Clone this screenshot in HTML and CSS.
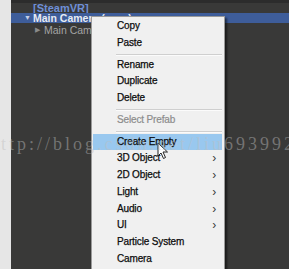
FILE: index.html
```html
<!DOCTYPE html>
<html>
<head>
<meta charset="utf-8">
<link rel="stylesheet" href="styles.css">
</head>
<body>
<div class="side"></div>
<div class="panel">
  <div class="topbar"></div>
  <div class="row steam">[SteamVR]</div>
  <div class="row selected"><span class="tri">&#9660;</span>Main Camera (eyes)</div>
  <div class="row child"><span class="tri">&#9654;</span>Main Camera (ears)</div>
</div>

<div class="menu">
  <div class="item">Copy</div>
  <div class="item">Paste</div>
  <div class="sep"></div>
  <div class="item">Rename</div>
  <div class="item">Duplicate</div>
  <div class="item">Delete</div>
  <div class="sep"></div>
  <div class="item disabled">Select Prefab</div>
  <div class="sep"></div>
  <div class="item hover">Create Empty</div>
  <div class="item sub">3D Object<span class="arr">&#8250;</span></div>
  <div class="item sub">2D Object<span class="arr">&#8250;</span></div>
  <div class="item sub">Light<span class="arr">&#8250;</span></div>
  <div class="item sub">Audio<span class="arr">&#8250;</span></div>
  <div class="item sub">UI<span class="arr">&#8250;</span></div>
  <div class="item">Particle System</div>
  <div class="item">Camera</div>
</div>

<svg class="cursor" width="12" height="18" viewBox="0 0 12 18">
  <path d="M1 1 L1 14 L4 11 L6.5 16.5 L8.5 15.5 L6 10 L10.5 10 Z" fill="#fff" stroke="#222" stroke-width="1" stroke-linejoin="round"/>
</svg>

<div class="watermark">http://blog.csdn.net/liu6939923</div>
</body>
</html>
```

FILE: styles.css
```css
html, body {
  margin: 0;
  padding: 0;
}
body {
  width: 289px;
  height: 269px;
  overflow: hidden;
  display: flex;
  background: #393939;
  font-family: "Liberation Sans", Arial, sans-serif;
  position: relative;
}
.side {
  width: 11px;
  background: #e6e6e6;
  flex: none;
}
.panel {
  flex: 1;
  background: #393938;
  display: flex;
  flex-direction: column;
}
.topbar {
  height: 3px;
  background: #2c2c2c;
}
.row {
  height: 10px;
  line-height: 10px;
  font-size: 10.5px;
  white-space: nowrap;
  overflow: hidden;
}
.steam {
  padding-left: 22px;
  color: #6e8fd6;
  font-weight: bold;
  font-size: 11px;
}
.selected {
  background: #3e5d9a;
  color: #e8ecf4;
  font-weight: bold;
  padding-left: 13px;
}
.selected .tri {
  font-size: 7px;
  color: #c6d0e6;
  margin-right: 2px;
  display: inline-block;
  width: 7px;
  vertical-align: top;
}
.child {
  margin-top: 2px;
  padding-left: 24px;
  color: #a4a4a4;
}
.child .tri {
  font-size: 7px;
  color: #8a8a8a;
  margin-right: 2px;
  display: inline-block;
  width: 7px;
  vertical-align: top;
}
.menu {
  position: absolute;
  left: 91px;
  top: 16px;
  width: 132px;
  height: 270px;
  background: #f0f0f0;
  border: 1px solid #9a9a9a;
  box-shadow: 2px 2px 2px rgba(0,0,0,0.55);
  padding-top: 1px;
  display: flex;
  flex-direction: column;
}
.item {
  height: 16.75px;
  line-height: 16.75px;
  padding-left: 25px;
  font-size: 10px;
  letter-spacing: -0.15px;
  color: #0c0c0c;
  -webkit-text-stroke: 0.25px #0c0c0c;
  position: relative;
  margin: 0 2px 0 0;
  flex: none;
}
.item.disabled {
  color: #8c8c8c;
  -webkit-text-stroke: 0.2px #8c8c8c;
}
.item.hover {
  background: #99c8ef;
  margin-left: 1px;
  padding-left: 24px;
}
.arr {
  position: absolute;
  right: 6px;
  top: 0;
  font-size: 12px;
  color: #3a3a3a;
  -webkit-text-stroke: 0;
}
.sep {
  height: 5px;
  flex: none;
  position: relative;
}
.sep::after {
  content: "";
  position: absolute;
  left: 24px;
  right: 2px;
  top: 2px;
  height: 1px;
  background: #cfcfcf;
  border-bottom: 1px solid #fbfbfb;
}
.cursor {
  position: absolute;
  left: 157px;
  top: 142px;
}
.watermark {
  position: absolute;
  left: -11px;
  top: 134px;
  font-family: "Liberation Serif", serif;
  font-size: 18px;
  letter-spacing: 3px;
  color: rgba(190, 190, 190, 0.45);
  white-space: nowrap;
  pointer-events: none;
}
```
